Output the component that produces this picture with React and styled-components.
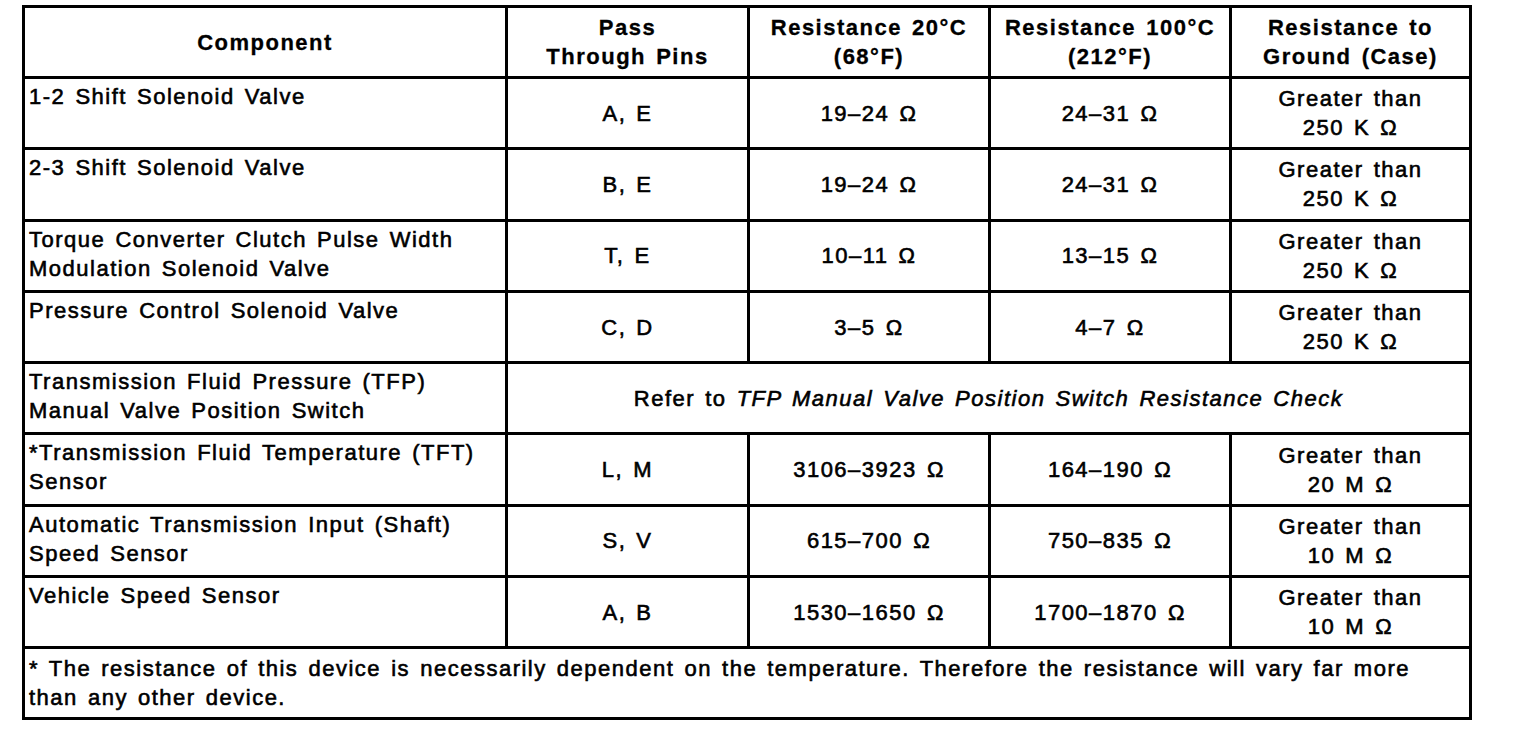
import React from 'react';
import styled, { createGlobalStyle } from 'styled-components';

const Global = createGlobalStyle`
  html, body { margin: 0; padding: 0; background: #fff; }
  body { font-family: "Liberation Sans", Arial, Helvetica, sans-serif; color: #000; }
`;

const Page = styled.div`
  padding: 5px 0 0 22px;
`;

const Table = styled.table`
  border-collapse: collapse;
  table-layout: fixed;
  width: 1447px;
  border: 3px solid #000;
  font-size: 22px;
  letter-spacing: 1.5px;
  word-spacing: 2.5px;
  line-height: 29px;
`;

const HeadCell = styled.th`
  border: 3px solid #000;
  height: 68px;
  padding: 0;
  font-weight: 700;
  text-align: center;
  vertical-align: middle;
  -webkit-text-stroke: 0.3px #000;
`;

const Row = styled.tr``;

const Cell = styled.td`
  border: 3px solid #000;
  height: 65.3px;
  padding: ${p => (p.$top ? '3px 0 0 4px' : '0')};
  text-align: ${p => (p.$top ? 'left' : 'center')};
  vertical-align: ${p => (p.$top ? 'top' : 'middle')};
  -webkit-text-stroke: 0.6px #000;
`;

const Note = styled.td`
  border: 3px solid #000;
  height: 68px;
  padding: 0 0 0 4px;
  text-align: left;
  vertical-align: middle;
  -webkit-text-stroke: 0.6px #000;
`;

const Em = styled.i`
  font-style: italic;
`;

const rows = [
  { name: ['1-2 Shift Solenoid Valve'], pins: 'A, E', r20: '19–24 Ω', r100: '24–31 Ω', gnd: '250 K Ω' },
  { name: ['2-3 Shift Solenoid Valve'], pins: 'B, E', r20: '19–24 Ω', r100: '24–31 Ω', gnd: '250 K Ω' },
  { name: ['Torque Converter Clutch Pulse Width', 'Modulation Solenoid Valve'], pins: 'T, E', r20: '10–11 Ω', r100: '13–15 Ω', gnd: '250 K Ω' },
  { name: ['Pressure Control Solenoid Valve'], pins: 'C, D', r20: '3–5 Ω', r100: '4–7 Ω', gnd: '250 K Ω' },
  { name: ['Transmission Fluid Pressure (TFP)', 'Manual Valve Position Switch'], refer: true },
  { name: ['*Transmission Fluid Temperature (TFT)', 'Sensor'], pins: 'L, M', r20: '3106–3923 Ω', r100: '164–190 Ω', gnd: '20 M Ω' },
  { name: ['Automatic Transmission Input (Shaft)', 'Speed Sensor'], pins: 'S, V', r20: '615–700 Ω', r100: '750–835 Ω', gnd: '10 M Ω' },
  { name: ['Vehicle Speed Sensor'], pins: 'A, B', r20: '1530–1650 Ω', r100: '1700–1870 Ω', gnd: '10 M Ω' },
];

const Lines = ({ lines }) =>
  lines.map((l, i) => (
    <React.Fragment key={i}>
      {i > 0 && <br />}
      {l}
    </React.Fragment>
  ));

export default function App() {
  return (
    <Page>
      <Global />
      <Table>
        <colgroup>
          <col style={{ width: 483 }} />
          <col style={{ width: 242 }} />
          <col style={{ width: 241 }} />
          <col style={{ width: 241 }} />
          <col style={{ width: 240 }} />
        </colgroup>
        <thead>
          <Row>
            <HeadCell>Component</HeadCell>
            <HeadCell><Lines lines={['Pass', 'Through Pins']} /></HeadCell>
            <HeadCell><Lines lines={['Resistance 20°C', '(68°F)']} /></HeadCell>
            <HeadCell><Lines lines={['Resistance 100°C', '(212°F)']} /></HeadCell>
            <HeadCell><Lines lines={['Resistance to', 'Ground (Case)']} /></HeadCell>
          </Row>
        </thead>
        <tbody>
          {rows.map((r, i) => (
            <Row key={i}>
              <Cell $top><Lines lines={r.name} /></Cell>
              {r.refer ? (
                <Cell colSpan={4}>
                  Refer to <Em>TFP Manual Valve Position Switch Resistance Check</Em>
                </Cell>
              ) : (
                <>
                  <Cell>{r.pins}</Cell>
                  <Cell>{r.r20}</Cell>
                  <Cell>{r.r100}</Cell>
                  <Cell><Lines lines={['Greater than', r.gnd]} /></Cell>
                </>
              )}
            </Row>
          ))}
          <Row>
            <Note colSpan={5}>
              <Lines
                lines={[
                  '* The resistance of this device is necessarily dependent on the temperature. Therefore the resistance will vary far more',
                  'than any other device.',
                ]}
              />
            </Note>
          </Row>
        </tbody>
      </Table>
    </Page>
  );
}
